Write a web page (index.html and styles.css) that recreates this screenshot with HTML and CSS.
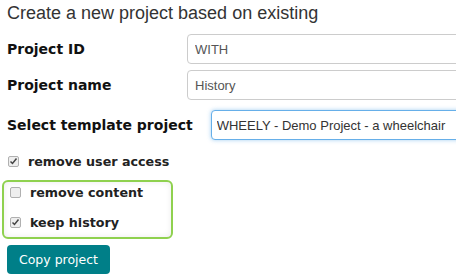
FILE: index.html
```html
<!DOCTYPE html>
<html lang="en">
<head>
  <meta charset="UTF-8"/>
  <title>Copy project</title>
  <link rel="stylesheet" href="styles.css">
</head>
<body>
<div class="copy-form">
  <h3>Create a new project based on existing</h3>

  <div class="row"><label class="lbl" for="pid">Project ID</label><input class="field" id="pid" type="text" value="WITH"/></div>
  <div class="row"><label class="lbl" for="pname">Project name</label><input class="field" id="pname" type="text" value="History"/></div>
  <div class="row row-select"><label class="lbl" for="tpl">Select template project</label>
    <select class="field focus" id="tpl"><option>WHEELY - Demo Project - a wheelchair</option></select>
  </div>

  <label class="check">
    <svg class="box" width="11" height="11" viewBox="0 0 11 11"><rect x=".5" y=".5" width="10" height="10" rx="1.5"/><path d="M2.5 5.5l2 2 4-5"/></svg>
    remove user access
  </label>
  <div class="highlight">
    <label class="check">
      <svg class="box" width="11" height="11" viewBox="0 0 11 11"><rect x=".5" y=".5" width="10" height="10" rx="1.5"/></svg>
      remove content
    </label>
    <label class="check">
      <svg class="box" width="11" height="11" viewBox="0 0 11 11"><rect x=".5" y=".5" width="10" height="10" rx="1.5"/><path d="M2.5 5.5l2 2 4-5"/></svg>
      keep history
    </label>
  </div>

  <button class="btn">Copy project</button>
</div>
</body>
</html>
```

FILE: styles.css
```css
*{box-sizing:border-box}
body{margin:0;background:#fff;color:#333;overflow:hidden}
.copy-form{padding:0 0 0 7px;width:456px;overflow:hidden}
h3{margin:0;padding-top:1px;font:18px/24px 'Liberation Sans',Arial,sans-serif;color:#333;font-weight:normal;white-space:nowrap}
.row{display:flex;align-items:center;margin-top:6px}
h3 + .row{margin-top:9px}
.row-select{margin-top:10px}
.lbl{flex:none;min-width:180px;padding-right:18px;font:bold 14px 'DejaVu Sans',Verdana,sans-serif;color:#111}
.field{flex:none;height:30px;width:320px;border:1px solid #ccc;border-radius:4px;padding:0 7px;font:13px 'Liberation Sans',Arial,sans-serif;color:#555;background:#fff}
select.field{-webkit-appearance:none;appearance:none;color:#333;padding:0 5px}
.field.focus{border-color:#66afe9;box-shadow:0 0 4px rgba(102,175,233,.6)}
.check{display:flex;align-items:center;gap:9px;height:30px;margin-top:6px;font:bold 12.7px 'DejaVu Sans',Verdana,sans-serif;color:#222}
.box{flex:none;margin-left:1px}
.box rect{fill:#eee;stroke:#b0b0b0}
.box path{fill:none;stroke:#444;stroke-width:1.5}
.highlight{margin:4px 0 0 -5px;padding:0 0 5px 5px;width:171px;border:2px solid #8fd14f;border-radius:6px;box-shadow:inset 0 0 6px rgba(0,0,0,.08);display:flex;flex-direction:column;gap:10px}
.highlight .check{margin:0;height:20px}
.btn{display:block;margin-top:6px;height:29px;width:103px;padding:0;border:none;border-radius:4px;background:#007f88;color:#fff;font:12.5px 'DejaVu Sans',Verdana,sans-serif}
```
